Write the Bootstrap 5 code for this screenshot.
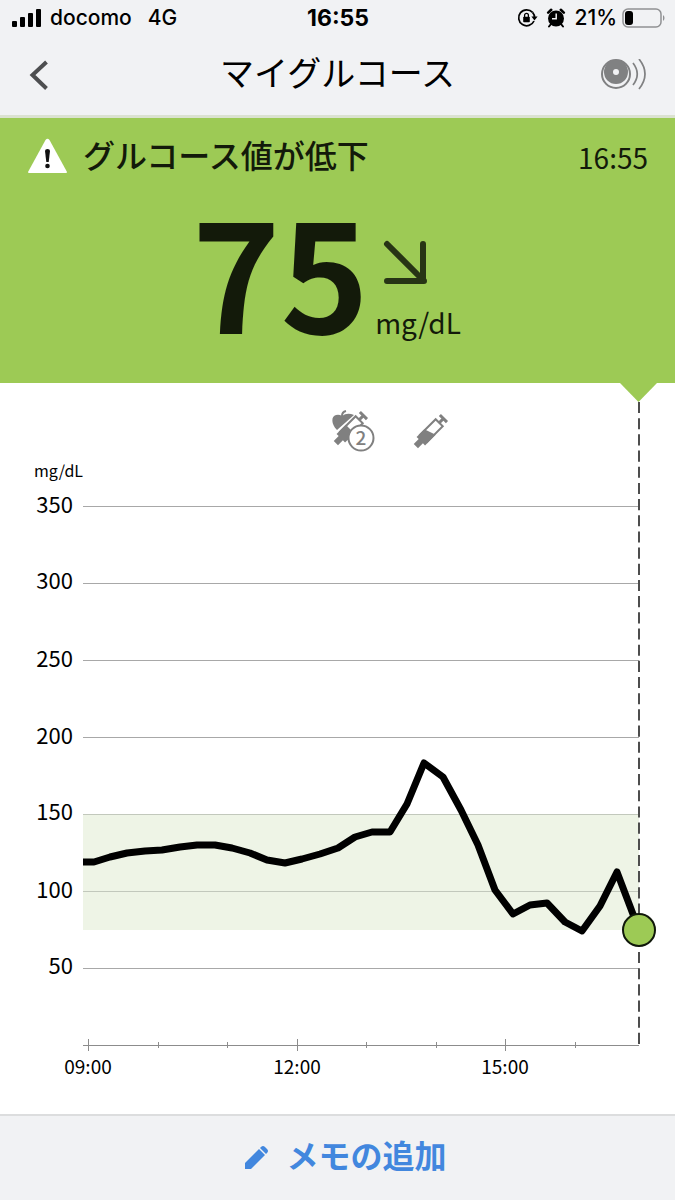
<!DOCTYPE html>
<html lang="ja">
<head>
<meta charset="utf-8">
<meta name="viewport" content="width=device-width, initial-scale=1">
<title>マイグルコース</title>
<link rel="stylesheet" href="https://cdn.jsdelivr.net/npm/bootstrap@5.3.0/dist/css/bootstrap.min.css">
<style>
  :root { --bar: #f1f2f4; --glucose: #9dca55; --ink: #131a0a; --action: #4287de; }
  body { font-family: "Noto Sans CJK JP", sans-serif; color: #000; background: #fff; }
  svg { display: block; }
  .side { flex: 1 1 0; }
  .app-head { background: var(--bar); border-bottom: 3px solid #dbe2d0; }
  .status { font-family: Inter, sans-serif; font-size: 21px; line-height: 36px; font-weight: 500; height: 36px; padding: 0 10px 0 11px; }
  .status .clock { font-size: 23px; font-weight: 700; }
  .title-bar { height: 79px; padding: 0 28px; }
  .title-bar h1 { font-size: 34px; line-height: 48px; font-weight: 400; padding-bottom: 8px; }
  .reading { background: var(--glucose); color: var(--ink); height: 265px; }
  .alert-row { padding: 16px 27px 0 28px; }
  .alert-row h2 { font-size: 32px; line-height: 40px; font-weight: 500; padding-bottom: 6px; }
  .alert-row time { font-size: 28px; line-height: 46px; }
  .value { font-size: 150px; line-height: 150px; font-weight: 700; }
  .unit { font-size: 28px; line-height: 44px; }
  .value-row { padding: 14px 22px 0 0; }
  .trend { padding: 46px 0 0 6px; }
  .chart text { fill: #000; }
  .tick-y { font-size: 22px; text-anchor: end; }
  .tick-x { font-size: 19px; text-anchor: middle; }
  .app-foot { background: var(--bar); border-top: 2px solid #dcddde; height: 86px; padding-left: 16px; }
  .add-note { color: var(--action); font-size: 32px; line-height: 40px; font-weight: 700; }
  .add-note span { padding-bottom: 8px; }
</style>
</head>
<body class="d-flex flex-column min-vh-100">

<header class="app-head">
  <div class="status d-flex align-items-center">
    <div class="side d-flex align-items-center">
      <svg width="31" height="20" viewBox="0 0 31 20" aria-hidden="true">
        <rect x="1" y="13" width="5" height="6" rx="1"/><rect x="9" y="9" width="5" height="10" rx="1"/><rect x="17" y="5" width="5" height="14" rx="1"/><rect x="25" y="1" width="5" height="18" rx="1"/>
      </svg>
      <span class="ms-2">docomo</span><span class="ms-3">4G</span>
    </div>
    <span class="clock">16:55</span>
    <div class="side d-flex align-items-center justify-content-end">
      <svg class="me-2" width="21" height="20" viewBox="0 0 21 20" aria-hidden="true">
        <path d="M15.6 4.4A8 8 0 1 0 17 13" fill="none" stroke="#000" stroke-width="1.7"/>
        <path d="M17.6 10a8 8 0 0 0-2-5.6" fill="none" stroke="#000" stroke-width="1.7"/>
        <path d="M14.4 8.6h6.2l-3.1 4z"/>
        <rect x="6.2" y="8.8" width="6.6" height="5.4" rx=".8"/>
        <path d="M7.6 9V7.200a1.900 1.900 0 0 1 3.800 0V9" fill="none" stroke="#000" stroke-width="1.300"/>
      </svg>
      <svg class="me-2" width="20" height="20" viewBox="0 0 20 20" aria-hidden="true">
        <circle cx="10" cy="10.500" r="8"/>
        <path d="M2.200 4.600 5.200 1.800M17.800 4.600l-3-2.800" stroke="#000" stroke-width="2.600" stroke-linecap="round"/>
        <path d="m5 16-2 2.500M15 16l2 2.500" stroke="#000" stroke-width="2" stroke-linecap="round"/>
        <path d="M10.200 5.500v5.300H6" fill="none" stroke="#f1f2f4" stroke-width="1.500"/>
      </svg>
      <span>21%</span>
      <svg class="ms-1" width="44" height="22" viewBox="0 0 44 22" aria-hidden="true">
        <rect x="2" y="2" width="38" height="18" rx="5" fill="none" stroke="#909193" stroke-width="1.500"/>
        <rect x="4" y="4" width="8" height="14" rx="3"/>
        <path d="M42 8c2 1.500 2 4.500 0 6z" fill="#909193"/>
      </svg>
    </div>
  </div>
  <nav class="title-bar d-flex align-items-center" aria-label="タイトル">
    <div class="side">
      <button class="btn border-0 p-0" type="button" aria-label="戻る">
        <svg width="22" height="32" viewBox="0 0 22 32"><path d="M18.500 2 4.500 15l14 13.500" fill="none" stroke="#4d4e50" stroke-width="4"/></svg>
      </button>
    </div>
    <h1 class="mb-0">マイグルコース</h1>
    <div class="side d-flex justify-content-end">
      <button class="btn border-0 p-0" type="button" aria-label="センサーをスキャン">
        <svg width="48" height="34" viewBox="0 0 48 34" fill="none" stroke="#808182">
          <circle cx="17" cy="15" r="14" stroke-width="2"/>
          <circle cx="17" cy="13" r="12" fill="#808182" stroke="none"/>
          <circle cx="17" cy="13" r="3" fill="#f1f2f4" stroke="none"/>
          <path d="M34 4q8.500 11 0 22" stroke-width="1.700"/><path d="M40 0q12 15 0 30" stroke-width="1.700"/>
        </svg>
      </button>
    </div>
  </nav>
</header>

<section class="reading">
  <div class="alert-row d-flex align-items-center">
    <svg width="39" height="38" viewBox="0 0 39 38" aria-hidden="true">
      <path d="M17.500 2q2-2.500 4 0L39 34q0 1-1 1H1q-1 0-1-1z" fill="#fff"/>
      <path d="M17 13q0-2 2.500-2t2.500 2l-1.300 11h-2.400z" fill="#111"/><circle cx="19.500" cy="28" r="2.300" fill="#111"/>
    </svg>
    <h2 class="my-0 ms-3">グルコース値が低下</h2>
    <time class="ms-auto">16:55</time>
  </div>
  <div class="value-row d-flex justify-content-center">
    <span class="value">75</span>
    <div class="trend">
      <svg class="ms-2" width="44" height="44" viewBox="0 0 44 44" aria-label="下降中" fill="none" stroke="#131a0a" stroke-width="6" stroke-linecap="round">
        <path d="M4 4l36 36M40 4v37M4 41h37" stroke-opacity=".85"/>
      </svg>
      <div class="unit mt-3">mg/dL</div>
    </div>
  </div>
</section>

<main class="flex-grow-1">
  <svg class="chart w-100" viewBox="0 0 675 731" role="img" aria-label="グルコースの推移">
    <path d="M620 0h37l-18.500 19z" fill="#9dca55"/>

    <!-- meal and insulin notes -->
    <g fill="#808080">
      <path d="M337 47C331 41 331 33 336 32q3-1 6 1 5-4 12-1z"/>
      <path d="M342 33q0-4 4-5" fill="none" stroke="#808080" stroke-width="2"/>
      <g transform="translate(350 46) rotate(45)">
        <path d="M-5-13H5V9H-5z" fill="#fff" stroke="#808080" stroke-width="2"/>
        <path d="M-6 0H6v13H3v7h-6v-7h-3z"/>
        <path d="M0-13v-6M-5-19H5" fill="none" stroke="#808080" stroke-width="3"/>
      </g>
      <circle cx="361" cy="55" r="12.500" fill="#fff" stroke="#808080" stroke-width="2"/>
      <text x="361" y="62" font-size="19" font-weight="500" text-anchor="middle" style="fill:#808080">2</text>
      <g transform="translate(430 49) rotate(45)">
        <path d="M-5-13H5V9H-5z" fill="#fff" stroke="#808080" stroke-width="2"/>
        <path d="m-6 2 12-4v15H3v7h-6v-7h-3z"/>
        <path d="M0-13v-6M-5-19H5" fill="none" stroke="#808080" stroke-width="3"/>
      </g>
    </g>

    <rect x="83" y="431" width="556" height="116" fill="#eef4e6"/>
    <g stroke="#a8a8a8" shape-rendering="crispEdges">
      <path d="M83 123h556M83 200h556M83 277h556M83 354h556M83 585h556"/>
      <path d="M83 431h556M83 508h556" stroke="#c2c8bc"/>
      <path d="M83 662h556M88 656v12M297 656v12M505 656v12M158 659v6M227 659v6M366 659v6M436 659v6M575 659v6" stroke="#8c8c8c"/>
    </g>
    <path d="M639 19v643" pathLength="636" stroke="#4d4d4d" stroke-width="2" stroke-dasharray="11 5"/>

    <text x="34" y="94" font-size="16">mg/dL</text>
    <g class="tick-y">
      <text x="73" y="130">350</text><text x="73" y="206">300</text><text x="73" y="284">250</text><text x="73" y="361">200</text>
      <text x="73" y="437">150</text><text x="73" y="515">100</text><text x="73" y="591">50</text>
    </g>
    <g class="tick-x">
      <text x="88" y="691">09:00</text><text x="297" y="691">12:00</text><text x="505" y="691">15:00</text>
    </g>

    <polyline fill="none" stroke="#000" stroke-width="7" stroke-linejoin="round" points="83,479 94,479 110,474 127,470 145,468 162,467 180,464 197,462 215,462 232,465 250,470 267,477 285,480 302,476 320,471 338,465 355,454 372,449 390,449 407,421 424,380 443,394 461,427 478,462 495,507 513,531 530,522 547,520 565,539 582,548 600,523 617,489 639,547"/>
    <circle cx="639" cy="547" r="16" fill="#9dca55" stroke="#10180a" stroke-width="2"/>
  </svg>
</main>

<footer class="app-foot d-flex align-items-center justify-content-center">
  <button class="add-note btn border-0 p-0 d-flex align-items-center" type="button">
    <svg width="26" height="26" viewBox="0 0 26 26" fill="#4287de" aria-hidden="true">
      <path d="M1 24v-6L15 4l6 6L7 24z"/><path d="m16 3 1-1q2-2 4 0l2 2q2 2 0 4l-1 1z"/>
    </svg>
    <span class="ms-3">メモの追加</span>
  </button>
</footer>

<script src="https://cdn.jsdelivr.net/npm/bootstrap@5.3.0/dist/js/bootstrap.bundle.min.js"></script>
</body>
</html>
